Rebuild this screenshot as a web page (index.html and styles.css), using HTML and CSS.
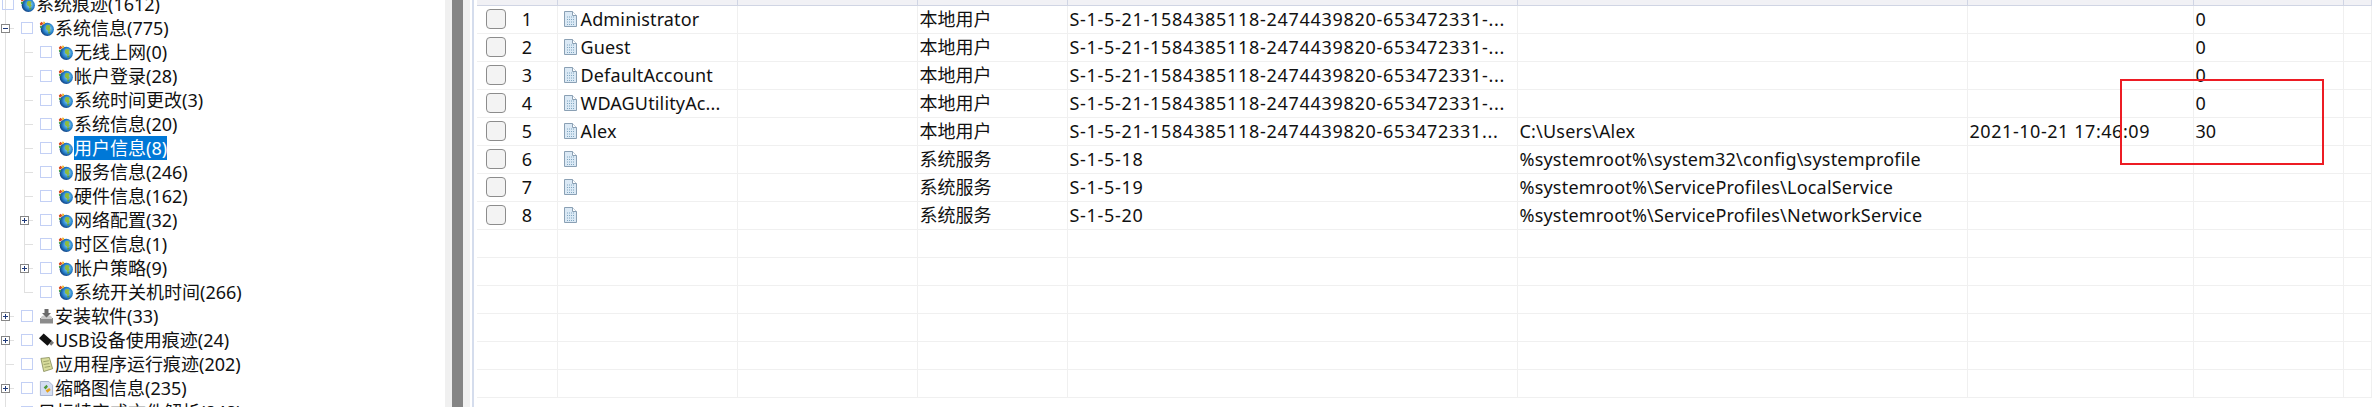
FILE: index.html
```html
<!DOCTYPE html>
<html lang="en">

<head>
    <meta charset="UTF-8">
    <title>系统痕迹</title>
    <link rel="stylesheet" href="styles.css">
</head>

<body>
    <svg class="defs" width="0" height="0">
        <defs>
            <radialGradient id="globeFill" cx="0.6" cy="0.45" r="0.65">
                <stop offset="0" stop-color="#9fdcf5"/>
                <stop offset="0.55" stop-color="#2a86d0"/>
                <stop offset="1" stop-color="#0a2f6e"/>
            </radialGradient>
            <symbol id="globe" viewBox="0 0 15 15">
                <circle cx="8.300" cy="8.300" r="6.600" fill="url(#globeFill)"/>
                <path d="M7.500 4.500c1.500-.8 3-.5 4 .6l-.8 2 1 1.500-2 2.700-1-2-1.600-1-.2-2.500z" fill="#8dbb3e"/>
                <path d="M9 11.500l2-1 .5 1-1.500 1.500z" fill="#5fa03a"/>
                <path d="M.8 2.500l1.800-1.700 1.600 1.500-1 1.800-1.800.4z" fill="#d8481f"/>
                <path d="M4.200.6l2 .5-.4 2-1.600.3z" fill="#f0b429"/>
                <path d="M.8 5.200l1.900-.5.5 1.900-1.900.6z" fill="#3a9a44"/>
            </symbol>
            <symbol id="doc" viewBox="0 0 13 16">
                <path d="M.5.5h8l4 4v11H.5z" fill="#dbe9f5" stroke="#8aa0b4"/>
                <path d="M8.500.5v4h4" fill="#fff" stroke="#8aa0b4"/>
                <path d="M3 6h7M3 8.500h7M3 11h7M3 13.500h7" stroke="#7fa6c0" stroke-dasharray="1 1"/>
            </symbol>
            <symbol id="installer" viewBox="0 0 15 15">
                <path d="M1 9h13v5.500H1z" fill="#8c8c8c"/>
                <path d="M2 8l2-1.500h7L13 8v2H2z" fill="#c9c9c9"/>
                <path d="M5.500 0h4v4h2.500l-4.500 4.500L3 4h2.500z" fill="#6b6b6b"/>
            </symbol>
            <symbol id="usb" viewBox="0 0 16 15">
                <path d="M0 5l5-5 9 8-5 5z" fill="#111"/>
                <path d="M11 11l3-3 2 2-3 3z" fill="#777"/>
            </symbol>
            <symbol id="note" viewBox="0 0 14 16">
                <path d="M1 1.500l9-1 3.500 12-9.500 3z" fill="#d8dc9c" stroke="#7d8450" stroke-width=".8"/>
                <path d="M3.500 5l6-1M4 8l6-1M5 11l6-1" stroke="#8a9058" stroke-width=".8"/>
            </symbol>
            <symbol id="thumb" viewBox="0 0 14 16">
                <path d="M.5.500h9l4 4v11H.5z" fill="#d5def2" stroke="#a3b0cc"/>
                <path d="M4 7l3-3 1.500 2L6 9z" fill="#4e9a3a"/>
                <path d="M6 10l4-2.500 1.500 2-3.500 3z" fill="#e8a21c"/>
            </symbol>
        </defs>
    </svg>

    <div class="window">
        <aside class="tree">
            <div class="tree-row root"><i class="box"></i><svg class="ico"><use href="#globe"/></svg><span>系统痕迹(1612)</span></div>
            <div class="tree-row lvl1"><b class="exp open"></b><i class="box"></i><svg class="ico"><use href="#globe"/></svg><span>系统信息(775)</span></div>

            <div class="branch">
                <div class="tree-row lvl2"><i class="box"></i><svg class="ico"><use href="#globe"/></svg><span>无线上网(0)</span></div>
                <div class="tree-row lvl2"><i class="box"></i><svg class="ico"><use href="#globe"/></svg><span>帐户登录(28)</span></div>
                <div class="tree-row lvl2"><i class="box"></i><svg class="ico"><use href="#globe"/></svg><span>系统时间更改(3)</span></div>
                <div class="tree-row lvl2"><i class="box"></i><svg class="ico"><use href="#globe"/></svg><span>系统信息(20)</span></div>
                <div class="tree-row lvl2"><i class="box"></i><svg class="ico"><use href="#globe"/></svg><span class="selected">用户信息(8)</span></div>
                <div class="tree-row lvl2"><i class="box"></i><svg class="ico"><use href="#globe"/></svg><span>服务信息(246)</span></div>
                <div class="tree-row lvl2"><i class="box"></i><svg class="ico"><use href="#globe"/></svg><span>硬件信息(162)</span></div>
                <div class="tree-row lvl2"><b class="exp"></b><i class="box"></i><svg class="ico"><use href="#globe"/></svg><span>网络配置(32)</span></div>
                <div class="tree-row lvl2"><i class="box"></i><svg class="ico"><use href="#globe"/></svg><span>时区信息(1)</span></div>
                <div class="tree-row lvl2"><b class="exp"></b><i class="box"></i><svg class="ico"><use href="#globe"/></svg><span>帐户策略(9)</span></div>
                <div class="tree-row lvl2"><i class="box"></i><svg class="ico"><use href="#globe"/></svg><span>系统开关机时间(266)</span></div>
            </div>

            <div class="tree-row lvl1"><b class="exp"></b><i class="box"></i><svg class="ico"><use href="#installer"/></svg><span>安装软件(33)</span></div>
            <div class="tree-row lvl1"><b class="exp"></b><i class="box"></i><svg class="ico"><use href="#usb"/></svg><span>USB设备使用痕迹(24)</span></div>
            <div class="tree-row lvl1"><i class="box"></i><svg class="ico"><use href="#note"/></svg><span>应用程序运行痕迹(202)</span></div>
            <div class="tree-row lvl1"><b class="exp"></b><i class="box"></i><svg class="ico"><use href="#thumb"/></svg><span>缩略图信息(235)</span></div>
            <div class="tree-row lvl1"><i class="box"></i><span class="no-icon">目标特定或文件解析(848)</span></div>
        </aside>

        <div class="scrollbar"><div class="thumb"></div></div>

        <main class="grid-pane">
            <table class="grid">
                <colgroup>
                    <col class="c-check"><col class="c-name"><col class="c-blank"><col class="c-type"><col class="c-sid"><col class="c-path"><col class="c-date"><col class="c-count"><col>
                </colgroup>
                <thead>
                    <tr><th></th><th></th><th></th><th></th><th></th><th></th><th></th><th></th><th></th></tr>
                </thead>
                <tbody id="rows"></tbody>
            </table>
            <div class="red-box"></div>
        </main>
    </div>

    <script src="script.js"></script>
</body>

</html>
```

FILE: styles.css
```css
* {
    margin: 0;
    padding: 0;
    box-sizing: border-box;
}

html,
body {
    height: 100%;
    overflow: hidden;
    background-color: #fff;
}

body {
    font-family: "Noto Sans", "Noto Sans CJK SC", sans-serif;
    font-size: 18px;
    color: #111;
}

.defs {
    position: absolute;
}

.window {
    display: flex;
    height: 407px;
}

/* left tree */
.tree {
    width: 445px;
    flex-shrink: 0;
    margin-top: -8px;
    overflow: hidden;
}

.tree-row {
    display: flex;
    align-items: center;
    height: 24px;
    white-space: nowrap;
    position: relative;
}

.root {
    padding-left: 2px;
}

.lvl1 {
    padding-left: 21px;
}

.lvl2 {
    padding-left: 40px;
}

.box {
    width: 12px;
    height: 12px;
    border: 1px solid #c3d0f5;
    flex-shrink: 0;
}

.ico {
    width: 15px;
    height: 15px;
    margin-left: 6px;
    flex-shrink: 0;
}

.tree-row span {
    margin-left: 1px;
    height: 24px;
    line-height: 24px;
}

.tree-row .no-icon {
    margin-left: 5px;
}

.tree-row .selected {
    background-color: #0078d7;
    color: #fff;
}

/* tree guide lines */
.branch {
    position: relative;
}

.branch::before {
    content: "";
    position: absolute;
    left: 24px;
    top: -1px;
    bottom: 11px;
    width: 1px;
    background-color: #e0e0e0;
}

.lvl2::before {
    content: "";
    position: absolute;
    left: 25px;
    top: 12px;
    width: 8px;
    height: 1px;
    background-color: #e0e0e0;
}

.lvl1::before {
    content: "";
    position: absolute;
    left: 6px;
    top: 12px;
    width: 8px;
    height: 1px;
    background-color: #e0e0e0;
}

.tree::before {
    content: "";
    position: absolute;
    left: 5px;
    top: 0;
    bottom: 0;
    width: 1px;
    background-color: #e0e0e0;
}

.exp {
    position: absolute;
    top: 8px;
    width: 9px;
    height: 9px;
    background-color: #fff;
    border: 1px solid #868686;
    z-index: 1;
}

.lvl1 .exp {
    left: 1px;
}

.lvl2 .exp {
    left: 20px;
}

.exp::before {
    content: "";
    position: absolute;
    left: 1px;
    top: 3px;
    width: 5px;
    height: 1px;
    background-color: #1f3a7a;
}

.exp::after {
    content: "";
    position: absolute;
    left: 3px;
    top: 1px;
    width: 1px;
    height: 5px;
    background-color: #1f3a7a;
}

.exp.open::after {
    display: none;
}

.scrollbar {
    width: 25px;
    flex-shrink: 0;
    padding: 0 7px;
    background-color: #f0f0f0;
}

.thumb {
    height: 100%;
    background-color: #858585;
}

/* right grid */
.grid-pane {
    flex-grow: 1;
    margin-left: 2px;
    padding-left: 3px;
    border-left: 2px solid #d5dded;
    position: relative;
    overflow: hidden;
}

.grid {
    border-collapse: collapse;
    table-layout: fixed;
    width: 1895px;
}

.c-check { width: 80px; }
.c-name { width: 180px; }
.c-blank { width: 180px; }
.c-type { width: 150px; }
.c-sid { width: 450px; }
.c-path { width: 450px; }
.c-date { width: 226px; }
.c-count { width: 150px; }

.grid th {
    height: 5px;
    background-color: #f1f1f5;
    border-bottom: 1px solid #d0d5e4;
    border-right: 1px solid #d0d5e4;
}

.grid td {
    height: 28px;
    padding: 0 2px;
    line-height: 26px;
    white-space: nowrap;
    overflow: hidden;
    border-bottom: 1px solid #f0f0f0;
    border-right: 1px solid #f0f0f0;
}

.row-head {
    display: flex;
    align-items: center;
}

.check {
    width: 20px;
    height: 20px;
    margin-left: 7px;
    background-color: #f3f3f3;
    border: 1px solid #8c8c8c;
    border-radius: 4px;
}

.row-no {
    width: 12px;
    margin-left: 15px;
    text-align: center;
}

.name-cell {
    display: flex;
    align-items: center;
    letter-spacing: 0.15px;
}

.doc {
    width: 13px;
    height: 16px;
    margin-left: 4px;
    margin-right: 4px;
    flex-shrink: 0;
}

/* digits run wider in the original font */
.grid .sid {
    letter-spacing: 0.7px;
}

.grid .date {
    letter-spacing: 0.55px;
}

.grid .path {
    letter-spacing: 0.2px;
}

.red-box {
    position: absolute;
    left: 1646px;
    top: 79px;
    width: 204px;
    height: 86px;
    border: 2px solid #ed1c24;
}
```

FILE: script.js
```js
const sid = 'S-1-5-21-1584385118-2474439820-653472331-...';
const users = [
    ['Administrator', '本地用户', sid, '', '', '0'],
    ['Guest', '本地用户', sid, '', '', '0'],
    ['DefaultAccount', '本地用户', sid, '', '', '0'],
    ['WDAGUtilityAc...', '本地用户', sid, '', '', '0'],
    ['Alex', '本地用户', 'S-1-5-21-1584385118-2474439820-653472331...', 'C:\\Users\\Alex', '2021-10-21 17:46:09', '30'],
    ['', '系统服务', 'S-1-5-18', '%systemroot%\\system32\\config\\systemprofile', '', ''],
    ['', '系统服务', 'S-1-5-19', '%systemroot%\\ServiceProfiles\\LocalService', '', ''],
    ['', '系统服务', 'S-1-5-20', '%systemroot%\\ServiceProfiles\\NetworkService', '', '']
];

const tbody = document.getElementById('rows');

users.forEach((user, i) => {
    const tr = document.createElement('tr');
    tr.innerHTML = `
        <td><div class="row-head"><div class="check"></div><span class="row-no">${i + 1}</span></div></td>
        <td><div class="name-cell"><svg class="doc"><use href="#doc"/></svg><span>${user[0]}</span></div></td>
        <td></td>
        <td>${user[1]}</td>
        <td class="sid">${user[2]}</td>
        <td class="path">${user[3]}</td>
        <td class="date">${user[4]}</td>
        <td>${user[5]}</td>
        <td></td>
    `;
    tbody.appendChild(tr);
});

// Empty rows down to the bottom of the window
for (let i = 0; i < 6; i++) {
    const tr = document.createElement('tr');
    tr.innerHTML = '<td></td>'.repeat(9);
    tbody.appendChild(tr);
}
```
